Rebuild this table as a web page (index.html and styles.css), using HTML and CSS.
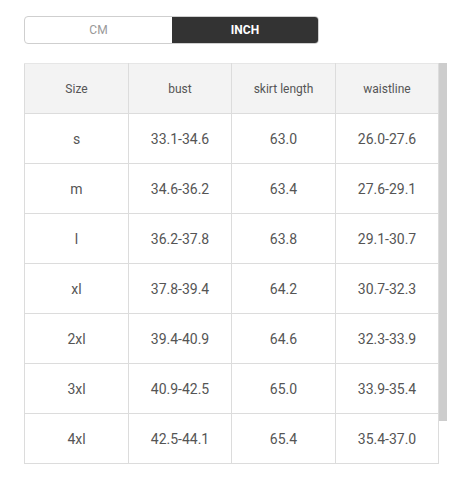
FILE: index.html
```html
<!DOCTYPE html>
<html>
<head>
<meta charset="utf-8">
<link rel="stylesheet" href="styles.css">
</head>
<body>
<div class="page">
  <div class="toggle">
    <div class="seg">CM</div>
    <div class="seg active">INCH</div>
  </div>
  <div class="scroller">
    <table class="chart">
      <colgroup><col class="c1"><col class="c2"><col class="c3"><col class="c4"></colgroup>
      <thead>
        <tr><th>Size</th><th>bust</th><th>skirt length</th><th>waistline</th></tr>
      </thead>
      <tbody>
        <tr><td>s</td><td>33.1-34.6</td><td>63.0</td><td>26.0-27.6</td></tr>
        <tr><td>m</td><td>34.6-36.2</td><td>63.4</td><td>27.6-29.1</td></tr>
        <tr><td>l</td><td>36.2-37.8</td><td>63.8</td><td>29.1-30.7</td></tr>
        <tr><td>xl</td><td>37.8-39.4</td><td>64.2</td><td>30.7-32.3</td></tr>
        <tr><td>2xl</td><td>39.4-40.9</td><td>64.6</td><td>32.3-33.9</td></tr>
        <tr><td>3xl</td><td>40.9-42.5</td><td>65.0</td><td>33.9-35.4</td></tr>
        <tr><td>4xl</td><td>42.5-44.1</td><td>65.4</td><td>35.4-37.0</td></tr>
      </tbody>
    </table>
    <div class="track"><div class="thumb"></div></div>
  </div>
</div>
</body>
</html>
```
FILE: styles.css
```css
html, body { margin: 0; padding: 0; background: #fff; }
body { font-family: Roboto, "Liberation Sans", sans-serif; color: #555; }
.page { padding: 16px 0 0 24px; }
.toggle {
  display: flex;
  width: 295px;
  height: 28px;
  box-sizing: border-box;
  border: 1px solid #cfcfcf;
  border-radius: 4px;
  overflow: hidden;
}
.seg {
  flex: 0 0 147px;
  display: flex;
  align-items: center;
  justify-content: center;
  font-size: 12px;
  color: #999;
}
.seg.active {
  flex: 1 1 auto;
  background: #333;
  color: #fff;
  font-weight: 700;
}
.scroller {
  display: flex;
  margin-top: 19px;
  width: 422px;
}
.chart {
  border-collapse: collapse;
  table-layout: fixed;
  width: 414px;
}
.c1 { width: 104px; }
.c2 { width: 103px; }
.c3 { width: 104px; }
.c4 { width: 103px; }
.chart th, .chart td {
  border: 1px solid #dcdcdc;
  height: 49px;
  padding: 0;
  text-align: center;
  vertical-align: middle;
}
.chart tr:first-child th { border-top-color: #e6e6e6; }
.chart th {
  background: #f3f3f3;
  font-weight: 400;
  font-size: 12px;
  color: #555;
}
.chart td { font-size: 14px; color: #555; }
.track { width: 8px; flex: 0 0 8px; }
.thumb { height: 358px; background: #cdcdcd; }
```
